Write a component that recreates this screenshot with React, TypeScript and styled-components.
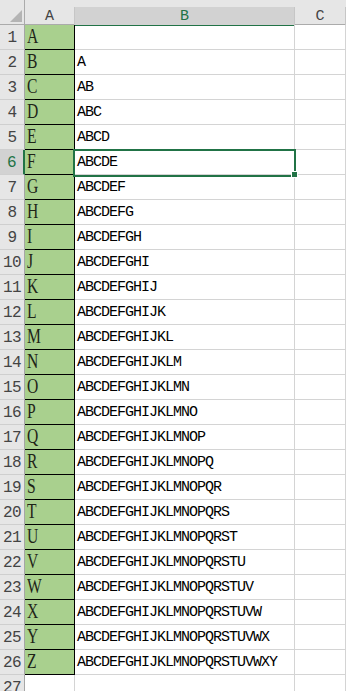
import React from 'react'
import styled, { createGlobalStyle } from 'styled-components'

const GlobalStyle = createGlobalStyle`
    html, body {
        margin: 0;
        padding: 0;
        background: #ffffff;
        overflow: hidden;
    }
`

const green = '#217346'
const grid = '#d4d4d4'
const headerBg = '#e6e6e6'

const LETTERS = 'ABCDEFGHIJKLMNOPQRSTUVWXYZ'.split('')
const SELECTED_ROW = 6

const Sheet = styled.div`
    position: relative;
    width: 346px;
    height: 691px;
    overflow: hidden;
    background: #fff;
`

const Grid = styled.div`
    display: grid;
    grid-template-columns: 25px 50px 220px 51px 20px;
    grid-auto-rows: 25px;
    grid-template-rows: 25px;
`

const Corner = styled.div`
    background: ${headerBg};
    border-right: 1px solid #ababab;
    border-bottom: 1px solid #ababab;
    box-sizing: border-box;
    position: relative;

    svg {
        position: absolute;
        left: 10px;
        top: 10px;
    }
`

const ColHeader = styled.div<{ $active?: boolean }>`
    box-sizing: border-box;
    background: ${headerBg};
    border-bottom: ${p => p.$active ? `2px solid ${green}` : '1px solid #ababab'};
    margin-bottom: ${p => p.$active ? '-1px' : '0'};
    display: flex;
    flex-direction: column;
`

const HeaderLabel = styled.div<{ $active?: boolean }>`
    margin-top: 7px;
    flex: 1;
    display: flex;
    align-items: center;
    justify-content: center;
    background: ${p => p.$active ? '#d2d2d2' : 'transparent'};
    border-right: 1px solid #c6c6c6;
    color: ${p => p.$active ? green : '#444'};
    font-family: "Liberation Mono", monospace;
    font-size: 15px;
    padding-top: 1px;
`

const RowHeader = styled.div<{ $active?: boolean }>`
    box-sizing: border-box;
    background: ${p => p.$active ? '#d2d2d2' : headerBg};
    border-right: ${p => p.$active ? `2px solid ${green}` : '1px solid #a6a6a6'};
    border-bottom: 1px solid #cfcfcf;
    color: ${p => p.$active ? green : '#444'};
    font-family: "Liberation Mono", monospace;
    font-size: 16px;
    display: flex;
    align-items: flex-end;
    justify-content: center;
    padding-bottom: 2px;
    letter-spacing: -0.5px;
`

const LetterCell = styled.div`
    box-sizing: border-box;
    background: #a9d08e;
    border-right: 1px solid #000;
    border-bottom: 1px solid #000;
    color: #1e2418;
    font-family: "Liberation Serif", serif;
    font-size: 20px;
    display: flex;
    align-items: flex-end;
    padding: 0 0 1px 2px;
`

// SimSun-like narrow capitals
const Glyph = styled.span`
    display: inline-block;
    transform: scaleX(0.78);
    transform-origin: left center;
`

const TextCell = styled.div`
    box-sizing: border-box;
    border-right: 1px solid ${grid};
    border-bottom: 1px solid ${grid};
    color: #000;
    font-family: "Liberation Mono", monospace;
    font-size: 15px;
    letter-spacing: -1px;
    display: flex;
    align-items: center;
    padding: 1px 0 0 2px;
    white-space: nowrap;
    overflow: hidden;
`

const EmptyCell = styled.div`
    box-sizing: border-box;
    border-right: 1px solid ${grid};
    border-bottom: 1px solid ${grid};
`

const Selection = styled.div`
    position: absolute;
    left: 73px;
    top: 149px;
    width: 223px;
    height: 28px;
    box-sizing: border-box;
    border: 2px solid ${green};
    pointer-events: none;
`

const FillHandle = styled.div`
    position: absolute;
    left: 291px;
    top: 171px;
    width: 7px;
    height: 7px;
    box-sizing: border-box;
    background: ${green};
    border: 1px solid #fff;
`

const App: React.FC = () =>
    <Sheet>
        <GlobalStyle />
        <Grid>
            <Corner>
                <svg width="12" height="12" viewBox="0 0 12 12">
                    <polygon points="12,0 12,12 0,12" fill="#b4b4b4" />
                </svg>
            </Corner>
            <ColHeader><HeaderLabel>A</HeaderLabel></ColHeader>
            <ColHeader $active><HeaderLabel $active>B</HeaderLabel></ColHeader>
            <ColHeader><HeaderLabel>C</HeaderLabel></ColHeader>
            <ColHeader><HeaderLabel /></ColHeader>
            {LETTERS.concat(['']).map((l, i) =>
                <React.Fragment key={i}>
                    <RowHeader $active={i + 1 === SELECTED_ROW}>{i + 1}</RowHeader>
                    {l ? <LetterCell><Glyph>{l}</Glyph></LetterCell> : <EmptyCell />}
                    <TextCell>{l ? LETTERS.slice(0, i).join('') : ''}</TextCell>
                    <EmptyCell />
                    <EmptyCell />
                </React.Fragment>
            )}
        </Grid>
        <Selection />
        <FillHandle />
    </Sheet>

export default App
